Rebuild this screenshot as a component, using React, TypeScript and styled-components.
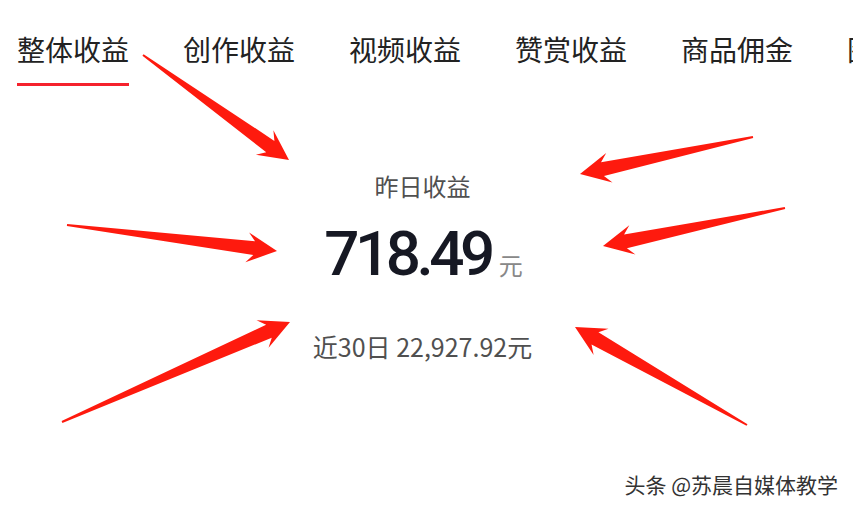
import React from "react";
import styled, { createGlobalStyle } from "styled-components";

const GlobalStyle = createGlobalStyle`
  html, body {
    margin: 0;
    padding: 0;
    background: #fff;
  }
  body {
    font-family: "Noto Sans CJK SC", "Noto Sans", sans-serif;
  }
`;

const Page = styled.div`
  position: relative;
  width: 853px;
  height: 510px;
  overflow: hidden;
  background: #fff;
`;

const TabBar = styled.nav`
  display: flex;
  gap: 54px;
  padding: 31px 0 0 17px;
  white-space: nowrap;
  overflow: hidden;
`;

const Tab = styled.div<{ $active?: boolean }>`
  flex: none;
  font-size: 28px;
  line-height: 36px;
  color: #222;
  padding-bottom: 16px;
  border-bottom: 3px solid ${(p) => (p.$active ? "#f5222d" : "transparent")};
`;

const Stats = styled.section`
  display: flex;
  flex-direction: column;
  align-items: center;
  padding-right: 8px;
  margin-top: 84px;
`;

const Label = styled.div`
  font-size: 24px;
  line-height: 32px;
  color: #505050;
`;

const AmountRow = styled.div`
  display: flex;
  align-items: baseline;
  gap: 8px;
  margin-top: 21px;
  padding-left: 2px;
`;

const Amount = styled.span`
  font-family: Roboto, "Noto Sans", sans-serif;
  font-weight: 500;
  font-size: 62px;
  line-height: 62px;
  letter-spacing: -4.5px;
  color: #161823;
`;

const Unit = styled.span`
  font-size: 24px;
  color: #888;
`;

const Sub = styled.div`
  margin-top: 45px;
  font-size: 25px;
  line-height: 32px;
  color: #505050;
`;

const Overlay = styled.svg`
  position: absolute;
  inset: 0;
  pointer-events: none;
`;

const Watermark = styled.div`
  position: absolute;
  right: 15px;
  bottom: 12px;
  font-size: 21px;
  line-height: 28px;
  color: #333;
  text-shadow: 1px 1px 0 #fff, -1px -1px 0 #fff, 1px -1px 0 #fff, -1px 1px 0 #fff;
`;

type ArrowProps = { from: [number, number]; to: [number, number] };

function Arrow({ from, to }: ArrowProps) {
  const dx = to[0] - from[0];
  const dy = to[1] - from[1];
  const len = Math.hypot(dx, dy);
  const angle = (Math.atan2(dy, dx) * 180) / Math.PI;
  const head = 30;
  const half = 15;
  const neck = 7;
  const pts = [
    [0, -1],
    [len - head + 7, -neck],
    [len - head, -half],
    [len, 0],
    [len - head, half],
    [len - head + 7, neck],
    [0, 1],
  ]
    .map((p) => p.join(","))
    .join(" ");
  return (
    <g transform={`translate(${from[0]} ${from[1]}) rotate(${angle})`}>
      <polygon points={pts} fill="#fe1a0e" />
    </g>
  );
}

const tabs = ["整体收益", "创作收益", "视频收益", "赞赏收益", "商品佣金", "图文收益"];

const arrows: ArrowProps[] = [
  { from: [143, 55], to: [289, 160] },
  { from: [753, 137], to: [580, 174] },
  { from: [67, 225], to: [277, 251] },
  { from: [785, 208], to: [603, 246] },
  { from: [62, 422], to: [290, 322] },
  { from: [747, 425], to: [575, 327] },
];

export default function App() {
  return (
    <Page>
      <GlobalStyle />
      <TabBar>
        {tabs.map((t, i) => (
          <Tab key={t} $active={i === 0}>
            {t}
          </Tab>
        ))}
      </TabBar>
      <Stats>
        <Label>昨日收益</Label>
        <AmountRow>
          <Amount>718.49</Amount>
          <Unit>元</Unit>
        </AmountRow>
        <Sub>近30日 22,927.92元</Sub>
      </Stats>
      <Overlay width="853" height="510" viewBox="0 0 853 510">
        {arrows.map((a, i) => (
          <Arrow key={i} {...a} />
        ))}
      </Overlay>
      <Watermark>头条 @苏晨自媒体教学</Watermark>
    </Page>
  );
}
